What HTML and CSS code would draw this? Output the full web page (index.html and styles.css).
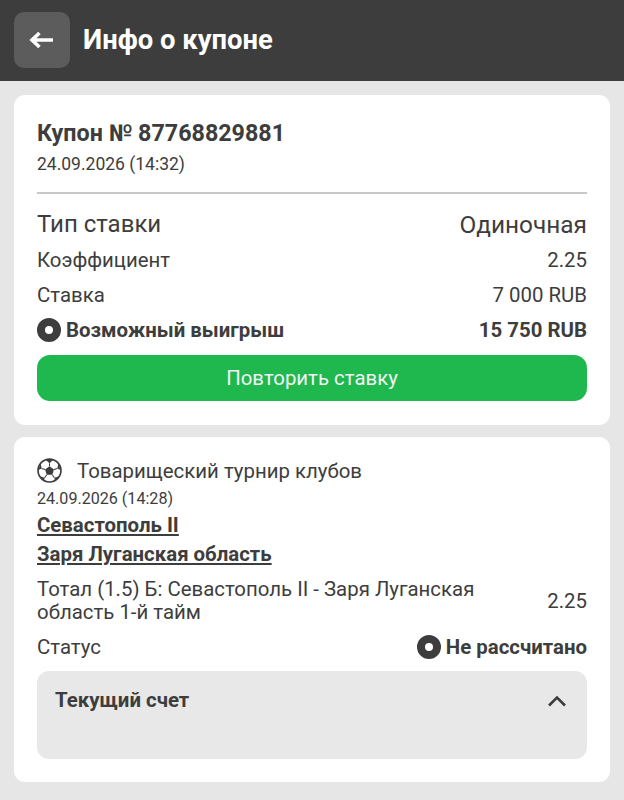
FILE: index.html
```html
<!DOCTYPE html>
<html lang="ru">
<head>
    <meta charset="UTF-8">
    <meta name="viewport" content="width=device-width, initial-scale=1.0">
    <title>Инфо о купоне</title>
    <link rel="stylesheet" href="styles.css">
</head>
<body>
    <header class="topbar">
        <button class="back-btn" type="button" aria-label="Назад">
            <svg width="26" height="20" viewBox="0 0 26 20"><path d="M25 10H5M11.500 3L4 10l7.500 7" fill="none" stroke="#fff" stroke-width="3.600"/></svg>
        </button>
        <h1>Инфо о купоне</h1>
    </header>

    <main class="content">
        <section class="card coupon">
            <h2>Купон № 87768829881</h2>
            <div class="date">24.09.2026 (14:32)</div>
            <hr>
            <div class="row row-type"><span>Тип ставки</span><span class="bet-kind">Одиночная</span></div>
            <div class="row"><span>Коэффициент</span><span>2.25</span></div>
            <div class="row"><span>Ставка</span><span>7 000 RUB</span></div>
            <div class="row row-bold">
                <span class="with-dot"><i class="dot"></i>Возможный выигрыш</span>
                <span>15 750 RUB</span>
            </div>
            <button class="repeat-btn" type="button">Повторить ставку</button>
        </section>

        <section class="card event">
            <div class="event-head">
                <svg width="25" height="25" viewBox="0 0 24 24">
                    <circle cx="12" cy="12" r="11" fill="#fff" stroke="#3d3d3d" stroke-width="1.600"/>
                    <path d="M12 8l4.300 3.100-1.600 5H9.300l-1.600-5z" fill="#3d3d3d"/>
                    <path d="M12 8V5M16.300 11.100l3.200-1M14.700 16.100l2 2.900M9.300 16.100l-2 2.900M7.700 11.100l-3.200-1" stroke="#3d3d3d" stroke-width="1"/>
                    <path d="M8 1.500L12 5l4-3.500zM19.500 10.100l1-5 2.200 6.500zM16.700 19l4.500-1.500-4 4.500zM7.300 19l-4.500-1.500 4 4.500zM4.500 10.100l-1-5-2.200 6.500z" fill="#3d3d3d"/>
                </svg>
                <span>Товарищеский турнир клубов</span>
            </div>
            <div class="date date-small">24.09.2026 (14:28)</div>
            <div class="team">Севастополь II</div>
            <div class="team">Заря Луганская область</div>
            <div class="row row-market">
                <span>Тотал (1.5) Б: Севастополь II - Заря Луганская область 1-й тайм</span>
                <span>2.25</span>
            </div>
            <div class="row row-status">
                <span>Статус</span>
                <span class="with-dot status"><i class="dot"></i>Не рассчитано</span>
            </div>
            <div class="score">
                <span>Текущий счет</span>
                <svg width="20" height="12" viewBox="0 0 20 12"><path d="M2 10.500l8-8 8 8" fill="none" stroke="#3d3d3d" stroke-width="2.600"/></svg>
            </div>
        </section>
    </main>
</body>
</html>
```

FILE: styles.css
```css
body {
    font-family: Roboto, 'Liberation Sans', sans-serif;
    background-color: #e6e6e6;
    color: #3d3d3d;
    margin: 0;
}
.topbar {
    display: flex;
    align-items: center;
    gap: 13px;
    height: 81px;
    padding: 0 14px 1px;
    background-color: #3d3d3d;
    box-sizing: border-box;
}
.topbar h1 {
    margin: 0;
    color: #fff;
    font-size: 27.4px;
    font-weight: 700;
}
.back-btn {
    display: flex;
    align-items: center;
    justify-content: center;
    width: 56px;
    height: 56px;
    padding: 0 3px 0 0;
    border: 0;
    border-radius: 10px;
    background-color: #5c5c5c;
}
.content {
    display: flex;
    flex-direction: column;
    gap: 12px;
    padding: 14px 14px 0;
}
.card {
    background-color: #fff;
    border-radius: 11px;
    padding: 0 23px;
}
.coupon {
    height: 330px;
    box-sizing: border-box;
    padding-top: 23px;
}
.coupon h2 {
    margin: 0;
    font-size: 23.3px;
    line-height: 30px;
    font-weight: 700;
}
.date {
    margin-top: 5px;
    font-size: 17.5px;
    line-height: 22px;
}
hr {
    height: 2px;
    margin: 17px 0 0;
    border: 0;
    background-color: #c8c8c8;
}
.row {
    display: flex;
    justify-content: space-between;
    align-items: center;
    height: 35px;
    font-size: 20.4px;
}
.row-type {
    height: 30px;
    margin-top: 15px;
    margin-bottom: 3px;
    font-size: 24px;
}
.bet-kind {
    font-size: 24.4px;
}
.row-bold {
    font-weight: 700;
}
.with-dot {
    display: flex;
    align-items: center;
    gap: 5px;
}
.dot {
    width: 24px;
    height: 24px;
    border-radius: 50%;
    border: 8px solid #3d3d3d;
    background-color: #fff;
    box-sizing: border-box;
}
.repeat-btn {
    display: block;
    width: 100%;
    height: 46px;
    margin-top: 8px;
    padding: 0 0 1px;
    border: 0;
    border-radius: 13px;
    background-color: #1fb84f;
    color: #f2f2f2;
    font-family: inherit;
    font-size: 20.4px;
}
.event {
    height: 345px;
    box-sizing: border-box;
    padding-top: 21px;
}
.event-head {
    display: flex;
    align-items: center;
    gap: 15px;
    font-size: 20.4px;
    line-height: 24px;
}
.date-small {
    margin-top: 5px;
    font-size: 16.1px;
    line-height: 21px;
}
.team {
    margin-top: 4px;
    font-size: 20.4px;
    line-height: 25px;
    font-weight: 700;
    text-decoration: underline;
}
.row-market {
    height: 46px;
    margin-top: 11px;
    gap: 40px;
    line-height: 23px;
}
.row-status {
    margin-top: 5px;
}
.status {
    font-weight: 700;
}
.score {
    display: flex;
    justify-content: space-between;
    align-items: flex-start;
    height: 88px;
    margin-top: 7px;
    padding: 17px 20px 0 18px;
    border-radius: 12px;
    background-color: #e8e8e8;
    box-sizing: border-box;
    font-size: 20.4px;
    font-weight: 700;
}
.score svg {
    margin-top: 7px;
}
```
